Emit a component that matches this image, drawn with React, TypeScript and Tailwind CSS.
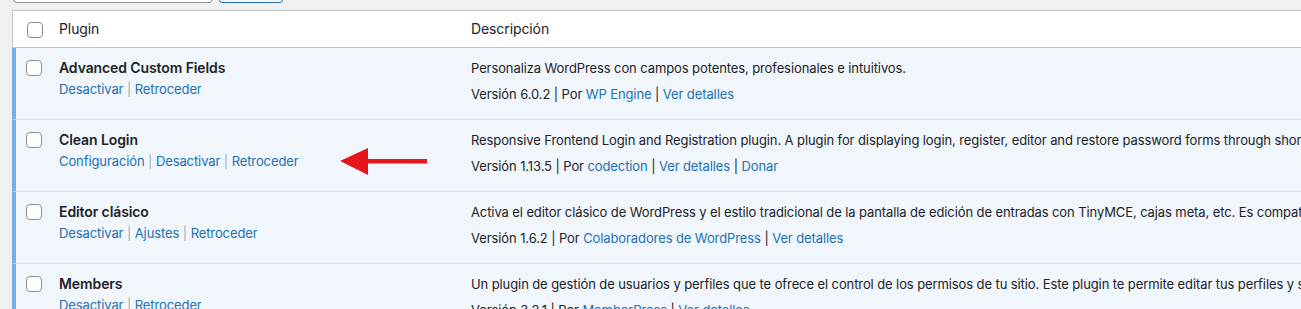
import React from 'react';

const plugins = [
  {
    name: 'Advanced Custom Fields',
    actions: ['Desactivar', 'Retroceder'],
    desc: 'Personaliza WordPress con campos potentes, profesionales e intuitivos.',
    version: '6.0.2',
    author: 'WP Engine',
    extra: ['Ver detalles'],
  },
  {
    name: 'Clean Login',
    actions: ['Configuración', 'Desactivar', 'Retroceder'],
    desc: 'Responsive Frontend Login and Registration plugin. A plugin for displaying login, register, editor and restore password forms through shortcodes.',
    version: '1.13.5',
    author: 'codection',
    extra: ['Ver detalles', 'Donar'],
  },
  {
    name: 'Editor clásico',
    actions: ['Desactivar', 'Ajustes', 'Retroceder'],
    desc: 'Activa el editor clásico de WordPress y el estilo tradicional de la pantalla de edición de entradas con TinyMCE, cajas meta, etc. Es compatible con los plugins existentes que amplían esta pantalla.',
    version: '1.6.2',
    author: 'Colaboradores de WordPress',
    extra: ['Ver detalles'],
  },
  {
    name: 'Members',
    actions: ['Desactivar', 'Retroceder'],
    desc: 'Un plugin de gestión de usuarios y perfiles que te ofrece el control de los permisos de tu sitio. Este plugin te permite editar tus perfiles y sus capacidades.',
    version: '3.2.1',
    author: 'MemberPress',
    extra: ['Ver detalles'],
  },
];

function Checkbox() {
  return <span className="block w-4 h-4 rounded-[4px] border border-[#8c8f94] bg-white" />;
}

function Arrow() {
  return (
    <svg className="absolute left-[338px] top-[146px]" width="92" height="32" viewBox="0 0 92 32">
      <polygon points="2,15 30,2 30,29" fill="#e3161b" />
      <rect x="28" y="13" width="61" height="4.5" fill="#e3161b" />
    </svg>
  );
}

export default function App() {
  return (
    <div
      className="relative w-full h-[309px] overflow-hidden bg-[#f0f0f1] text-[13px] text-[#1d2327] tracking-[-0.1px]"
      style={{ fontFamily: 'Inter, "Liberation Sans", sans-serif' }}
    >
      {/* search box + button, mostly scrolled out of view */}
      <div className="flex gap-[6px] pl-[13px] -mt-[28px] h-[38px]">
        <div className="w-[200px] h-[31px] rounded-[4px] border border-[#8c8f94] bg-white" />
        <div className="w-[64px] h-[31px] rounded-[3px] border border-[#2271b1] bg-[#f6f7f7]" />
      </div>

      <div className="ml-[12px] w-[1600px] border-t border-l border-[#c3c4c7] bg-white">
        {/* header */}
        <div className="flex h-[37px] border-b border-[#c3c4c7] bg-white">
          <div className="w-[36px] pl-[14px] pt-[11px]">
            <Checkbox />
          </div>
          <div className="w-[412px] px-[10px] py-[8px] text-[14px] leading-[20px]">Plugin</div>
          <div className="flex-1 px-[10px] py-[8px] text-[14px] leading-[20px]">Descripción</div>
        </div>

        {plugins.map((p) => (
          <div
            key={p.name}
            className="flex h-[72px] border-b border-[#dcdcde] border-l-4 border-l-[#72aee6] -ml-px bg-[#f0f6fc]"
          >
            <div className="w-[33px] shrink-0 pl-[10px] pt-[12px]">
              <Checkbox />
            </div>
            <div className="w-[412px] shrink-0 px-[10px] pt-[10px]">
              <div className="text-[14px] leading-[20px] font-semibold text-[#1d2327]">{p.name}</div>
              <div className="mt-px leading-[20px] whitespace-nowrap">
                {p.actions.map((a, i) => (
                  <span key={a}>
                    {i > 0 && <span className="text-[#a7aaad]"> | </span>}
                    <span className="text-[#2271b1]">{a}</span>
                  </span>
                ))}
              </div>
            </div>
            <div className="flex-1 px-[10px] pt-[10px] whitespace-nowrap overflow-hidden">
              <div className="leading-[20px]">{p.desc}</div>
              <div className="mt-[6px] leading-[20px]">
                Versión {p.version} | Por <span className="text-[#2271b1]">{p.author}</span>
                {p.extra.map((e) => (
                  <span key={e}>
                    {' | '}
                    <span className="text-[#2271b1]">{e}</span>
                  </span>
                ))}
              </div>
            </div>
          </div>
        ))}
      </div>

      <Arrow />
    </div>
  );
}
